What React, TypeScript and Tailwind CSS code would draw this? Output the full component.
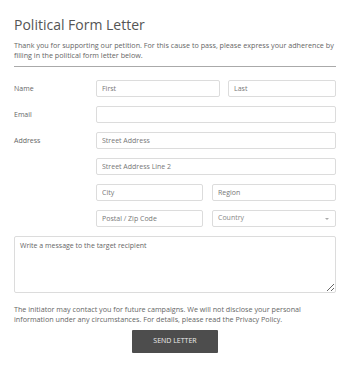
const font = { fontFamily: '"Open Sans", "Liberation Sans", sans-serif' };

const inputCls =
  "h-[17px] rounded-[2px] border border-[#dcdcdc] bg-white px-[5px] text-[7px] text-[#555] placeholder:text-[#777] outline-none";

function Row({ label, children }: { label?: string; children: React.ReactNode }) {
  return (
    <div className="flex items-center">
      <div className="w-[82px] shrink-0 text-[7px] text-[#666] pt-[1px]">{label}</div>
      <div className="flex flex-1 gap-[8px]">{children}</div>
    </div>
  );
}

export default function App() {
  return (
    <div className="w-[350px] h-[368px] bg-white px-[14px] pt-[15px]" style={font}>
      <h1 className="text-[14px] leading-[20px] text-[#555]">Political Form Letter</h1>
      <p className="mt-[5px] text-[7.2px] leading-[10px] text-[#666]">
        Thank you for supporting our petition. For this cause to pass, please express your adherence by filling in the
        political form letter below.
      </p>
      <div className="mt-[6px] h-px bg-[#aaa]" />

      <div className="mt-[13px] flex flex-col gap-[9px]">
        <Row label="Name">
          <input className={inputCls + " w-[124px]"} placeholder="First" />
          <input className={inputCls + " flex-1 min-w-0"} placeholder="Last" />
        </Row>
        <Row label="Email">
          <input className={inputCls + " flex-1 min-w-0"} />
        </Row>
        <Row label="Address">
          <input className={inputCls + " flex-1 min-w-0"} placeholder="Street Address" />
        </Row>
        <Row>
          <input className={inputCls + " flex-1 min-w-0"} placeholder="Street Address Line 2" />
        </Row>
        <Row>
          <div className="flex flex-1 gap-[9px]">
            <input className={inputCls + " w-[107px]"} placeholder="City" />
            <input className={inputCls + " flex-1 min-w-0"} placeholder="Region" />
          </div>
        </Row>
        <Row>
          <div className="flex flex-1 gap-[9px]">
            <input className={inputCls + " w-[107px]"} placeholder="Postal / Zip Code" />
            <div className={inputCls + " flex flex-1 items-center justify-between text-[#888]"}>
              <span>Country</span>
              <svg width="4" height="2" viewBox="0 0 4 2" className="mr-[1px]">
                <path d="M0 0h4L2 2z" fill="#aaa" />
              </svg>
            </div>
          </div>
        </Row>
        <textarea
          className="h-[57px] w-full rounded-[2px] border border-[#dcdcdc] px-[5px] py-[4px] text-[7px] leading-[10px] text-[#555] placeholder:text-[#666] outline-none"
          placeholder="Write a message to the target recipient"
        />
      </div>

      <p className="mt-[11px] text-[7.2px] leading-[10px] text-[#666]">
        The initiator may contact you for future campaigns. We will not disclose your personal information under any
        circumstances. For details, please read the Privacy Policy.
      </p>
      <div className="mt-[6px] flex justify-center">
        <button className="h-[23px] w-[86px] rounded-[1px] bg-[#4d4d4d] text-[7px] uppercase text-[#eee]">
          Send Letter
        </button>
      </div>
    </div>
  );
}
